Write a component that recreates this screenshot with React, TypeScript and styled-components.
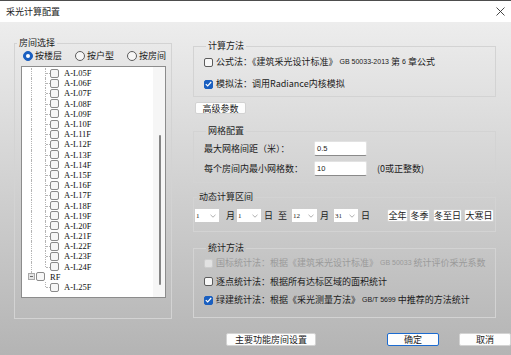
import styled, { createGlobalStyle } from "styled-components";

const GlobalStyle = createGlobalStyle`
  body {
    margin: 0;
    font-family: "Noto Sans CJK SC", "Noto Sans", sans-serif;
    color: #1b1b1b;
    text-autospace: no-autospace;
  }
  * {
    box-sizing: border-box;
  }
`;

const Window = styled.div`
  width: 511px;
  height: 355px;
  display: flex;
  flex-direction: column;
  overflow: hidden;
  background: linear-gradient(#ededed 22px, #b4b4b4 100%);
`;

const TitleBar = styled.div`
  height: 22px;
  flex: none;
  background: #ffffff;
  border-top: 1px solid #4d4d4d;
  display: flex;
  align-items: center;
  justify-content: space-between;
  padding: 0 6px 0 6px;
  font-size: 9px;
`;

const Body = styled.div`
  flex: 1;
  display: flex;
  flex-direction: column;
`;

const Main = styled.div`
  display: flex;
  align-items: flex-start;
  gap: 21px;
  padding: 15px 0 0 14px;
`;

const Group = styled.fieldset`
  margin: 0;
  padding: 0;
  min-width: 0;
  border: 1px solid #d3d3d3;
`;

const Legend = styled.legend`
  font-size: 9px;
  line-height: 12px;
  padding: 0 2px;
  margin-left: 2px;
`;

const LeftGroup = styled(Group)`
  width: 158px;
  padding-bottom: 20px;
`;

const RadioRow = styled.div`
  display: flex;
  align-items: center;
  height: 12px;
  margin-top: 1px;
  padding-left: 8px;
  gap: 13px;
  font-size: 9px;
`;

const Option = styled.label<{ $disabled?: boolean }>`
  display: flex;
  align-items: center;
  gap: 2px;
  font-size: 9px;
  line-height: 12px;
  height: 12px;
  white-space: nowrap;
  color: ${(p) => (p.$disabled ? "#9a9a9a" : "#1b1b1b")};
`;

const RadioDot = styled.span<{ $on?: boolean }>`
  width: 10px;
  height: 10px;
  border-radius: 50%;
  flex: none;
  display: flex;
  align-items: center;
  justify-content: center;
  border: 1px solid ${(p) => (p.$on ? "#1a5fc0" : "#5c5c5c")};
  background: ${(p) => (p.$on ? "#1a5fc0" : "#f6f6f6")};
  &::after {
    content: "";
    width: 4px;
    height: 4px;
    border-radius: 50%;
    background: #ffffff;
    display: ${(p) => (p.$on ? "block" : "none")};
  }
`;

const TreeBox = styled.div`
  margin: 4px 0 0 6px;
  width: 145px;
  height: 232px;
  border: 1px solid #8c8c8c;
  background: #ffffff;
  display: flex;
`;

const TreeRows = styled.div`
  flex: 1;
  padding-top: 1px;
  overflow: hidden;
`;

const Scroll = styled.div`
  width: 12px;
  flex: none;
  background: #f6f6f6;
  padding: 68px 0 0 6px;
`;

const Thumb = styled.div`
  width: 2px;
  height: 150px;
  border-radius: 1px;
  background: #858585;
`;

const Row = styled.div`
  height: 10.2px;
  display: flex;
  align-items: center;
  padding-left: 2px;
`;

const Guide = styled.span<{ $v: "full" | "top" | "none"; $h?: boolean }>`
  position: relative;
  width: 14px;
  flex: none;
  align-self: stretch;
  display: flex;
  align-items: center;
  justify-content: center;
  &::before {
    content: "";
    position: absolute;
    left: 7px;
    top: 0;
    bottom: ${(p) => (p.$v === "full" ? "0" : "50%")};
    border-left: 1px dotted #b4b4b4;
    display: ${(p) => (p.$v === "none" ? "none" : "block")};
  }
  &::after {
    content: "";
    position: absolute;
    left: 8px;
    right: 0;
    top: 50%;
    border-top: 1px dotted #b4b4b4;
    display: ${(p) => (p.$h ? "block" : "none")};
  }
`;

const Expander = styled.span`
  position: relative;
  z-index: 1;
  width: 7px;
  height: 7px;
  border: 1px solid #a9a9a9;
  background: #e4e4e4;
  display: flex;
  align-items: center;
  justify-content: center;
  &::after {
    content: "";
    width: 3px;
    height: 1px;
    background: #6a6a6a;
  }
`;

const TreeCheck = styled.span`
  position: relative;
  z-index: 1;
  width: 9px;
  height: 9px;
  flex: none;
  margin-left: -2px;
  border: 1px solid #8b8b8b;
  border-radius: 2px;
  background: #f7f7f7;
`;

const TreeLabel = styled.span`
  margin-left: 5px;
  font-family: "Liberation Serif", serif;
  font-size: 8.5px;
  line-height: 10px;
  color: #111111;
  white-space: nowrap;
`;

const RightCol = styled.div`
  width: 303px;
  display: flex;
  flex-direction: column;
  padding-top: 3px;
`;

const Stack = styled(Group)<{ $top?: number; $pt: number; $pb: number; $gap: number }>`
  width: 100%;
  margin-top: ${(p) => p.$top ?? 0}px;
  padding: ${(p) => p.$pt}px 0 ${(p) => p.$pb}px 10px;
  display: flex;
  flex-direction: column;
  gap: ${(p) => p.$gap}px;
`;

const DateGroup = styled(Group)`
  width: 100%;
  margin-top: 8px;
  padding: 6px 0 9px 1px;
`;

const Box = styled.span<{ $checked?: boolean; $disabled?: boolean }>`
  width: 9px;
  height: 9px;
  flex: none;
  margin-right: 1px;
  border-radius: 2px;
  display: flex;
  align-items: center;
  justify-content: center;
  border: 1px solid
    ${(p) => (p.$checked ? "#1a5fc0" : p.$disabled ? "#cdcdcd" : "#5c5c5c")};
  background: ${(p) =>
    p.$checked ? "#1a5fc0" : p.$disabled ? "#e2e2e2" : "#f8f8f8"};
`;

const Latin = styled.span`
  font-family: "Liberation Sans", sans-serif;
  font-size: 7px;
`;

const SmallButton = styled.button<{ $w: number; $ml?: number; $primary?: boolean }>`
  width: ${(p) => p.$w}px;
  height: 13px;
  margin-left: ${(p) => p.$ml ?? 0}px;
  padding: 0;
  flex: none;
  font-family: inherit;
  font-size: 9px;
  line-height: 11px;
  color: #1b1b1b;
  background: #fdfdfd;
  border: 1px solid ${(p) => (p.$primary ? "#1c6bd0" : "#d2d2d2")};
  border-radius: 2px;
`;

const AdvButton = styled(SmallButton)`
  height: 12px;
  margin: 5px 0 0 2px;
`;

const FieldRow = styled.div`
  display: flex;
  align-items: center;
  height: 15px;
  font-size: 9px;
`;

const FieldLabel = styled.span`
  width: 110px;
  white-space: nowrap;
`;

const TextBox = styled.div`
  width: 53px;
  height: 15px;
  padding-left: 2px;
  display: flex;
  align-items: center;
  background: #ffffff;
  border: 1px solid #e2e2e2;
  border-bottom-color: #8a8a8a;
  border-radius: 2px;
  font-family: "Liberation Sans", sans-serif;
  font-size: 7.5px;
`;

const Hint = styled.span`
  margin-left: 10px;
`;

const DateRow = styled.div`
  display: flex;
  align-items: center;
  height: 13px;
  font-size: 9px;
`;

const Select = styled.div<{ $w: number; $ml?: number }>`
  width: ${(p) => p.$w}px;
  height: 13px;
  margin-left: ${(p) => p.$ml ?? 0}px;
  padding: 0 3px 0 1px;
  display: flex;
  align-items: center;
  justify-content: space-between;
  background: #ffffff;
  font-family: "Liberation Serif", serif;
  font-size: 7px;
`;

const Unit = styled.span<{ $ml: number }>`
  margin-left: ${(p) => p.$ml}px;
  line-height: 13px;
`;

const Footer = styled.div`
  display: flex;
  align-items: center;
  margin-top: 14px;
  padding-left: 226px;
  gap: 20px;
`;

const FooterGap = styled.span`
  width: 36px;
`;

const floors = Array.from(
  { length: 20 },
  (_, i) => `A-L${String(i + 5).padStart(2, "0")}F`
);

function Check({ checked, disabled }: { checked?: boolean; disabled?: boolean }) {
  return (
    <Box $checked={checked} $disabled={disabled}>
      {checked && (
        <svg width="7" height="6" viewBox="0 0 7 6">
          <path d="M0.8 3.1 L2.7 4.9 L6.2 1" fill="none" stroke="#fff" strokeWidth="1.2" />
        </svg>
      )}
    </Box>
  );
}

function Chevron() {
  return (
    <svg width="6" height="4" viewBox="0 0 6 4">
      <path d="M0.5 0.8 L3 3.2 L5.5 0.8" fill="none" stroke="#9a9a9a" strokeWidth="0.8" />
    </svg>
  );
}

export default function App() {
  return (
    <Window>
      <GlobalStyle />
      <TitleBar>
        <span>采光计算配置</span>
        <svg width="9" height="9" viewBox="0 0 9 9">
          <path d="M0.5 0.5 L8.5 8.5 M8.5 0.5 L0.5 8.5" stroke="#333" strokeWidth="0.9" />
        </svg>
      </TitleBar>
      <Body>
        <Main>
          <LeftGroup>
            <Legend>房间选择</Legend>
            <RadioRow>
              <Option>
                <RadioDot $on />
                按楼层
              </Option>
              <Option>
                <RadioDot />
                按户型
              </Option>
              <Option>
                <RadioDot />
                按房间
              </Option>
            </RadioRow>
            <TreeBox>
              <TreeRows>
                {floors.map((f, i) => (
                  <Row key={f}>
                    <Guide $v="full" />
                    <Guide $v={i === floors.length - 1 ? "top" : "full"} $h />
                    <TreeCheck />
                    <TreeLabel>{f}</TreeLabel>
                  </Row>
                ))}
                <Row>
                  <Guide $v="top">
                    <Expander />
                  </Guide>
                  <TreeCheck />
                  <TreeLabel>RF</TreeLabel>
                </Row>
                <Row>
                  <Guide $v="none" />
                  <Guide $v="top" $h />
                  <TreeCheck />
                  <TreeLabel>A-L25F</TreeLabel>
                </Row>
              </TreeRows>
              <Scroll>
                <Thumb />
              </Scroll>
            </TreeBox>
          </LeftGroup>

          <RightCol>
            <Stack $pt={4} $pb={6} $gap={10}>
              <Legend>计算方法</Legend>
              <Option>
                <Check />
                公式法：《建筑采光设计标准》<Latin>GB 50033-2013</Latin>第<Latin>6</Latin>章公式
              </Option>
              <Option>
                <Check checked />
                模拟法：调用Radiance内核模拟
              </Option>
            </Stack>
            <AdvButton $w={51}>高级参数</AdvButton>

            <Stack $top={11} $pt={4} $pb={6} $gap={5}>
              <Legend>网格配置</Legend>
              <FieldRow>
                <FieldLabel>最大网格间距（米）：</FieldLabel>
                <TextBox>0.5</TextBox>
              </FieldRow>
              <FieldRow>
                <FieldLabel>每个房间内最小网格数：</FieldLabel>
                <TextBox>10</TextBox>
                <Hint>(0或正整数)</Hint>
              </FieldRow>
            </Stack>

            <DateGroup>
              <Legend>动态计算区间</Legend>
              <DateRow>
                <Select $w={24}>
                  1<Chevron />
                </Select>
                <Unit $ml={7}>月</Unit>
                <Select $w={24} $ml={2}>
                  1<Chevron />
                </Select>
                <Unit $ml={3}>日</Unit>
                <Unit $ml={5}>至</Unit>
                <Select $w={25} $ml={5}>
                  12<Chevron />
                </Select>
                <Unit $ml={3}>月</Unit>
                <Select $w={24} $ml={5}>
                  31<Chevron />
                </Select>
                <Unit $ml={3}>日</Unit>
                <SmallButton $w={21} $ml={17}>全年</SmallButton>
                <SmallButton $w={21} $ml={1}>冬季</SmallButton>
                <SmallButton $w={29} $ml={3}>冬至日</SmallButton>
                <SmallButton $w={30} $ml={2}>大寒日</SmallButton>
              </DateRow>
            </DateGroup>

            <Stack $top={10} $pt={3} $pb={11} $gap={6.5}>
              <Legend>统计方法</Legend>
              <Option $disabled>
                <Check disabled />
                国标统计法：根据《建筑采光设计标准》<Latin>GB 50033</Latin>统计评价采光系数
              </Option>
              <Option>
                <Check />
                逐点统计法：根据所有达标区域的面积统计
              </Option>
              <Option>
                <Check checked />
                绿建统计法：根据《采光测量方法》<Latin>GB/T 5699</Latin>中推荐的方法统计
              </Option>
            </Stack>
          </RightCol>
        </Main>

        <Footer>
          <SmallButton $w={90}>主要功能房间设置</SmallButton>
          <FooterGap />
          <SmallButton $w={52} $primary>
            确定
          </SmallButton>
          <SmallButton $w={52}>取消</SmallButton>
        </Footer>
      </Body>
    </Window>
  );
}
